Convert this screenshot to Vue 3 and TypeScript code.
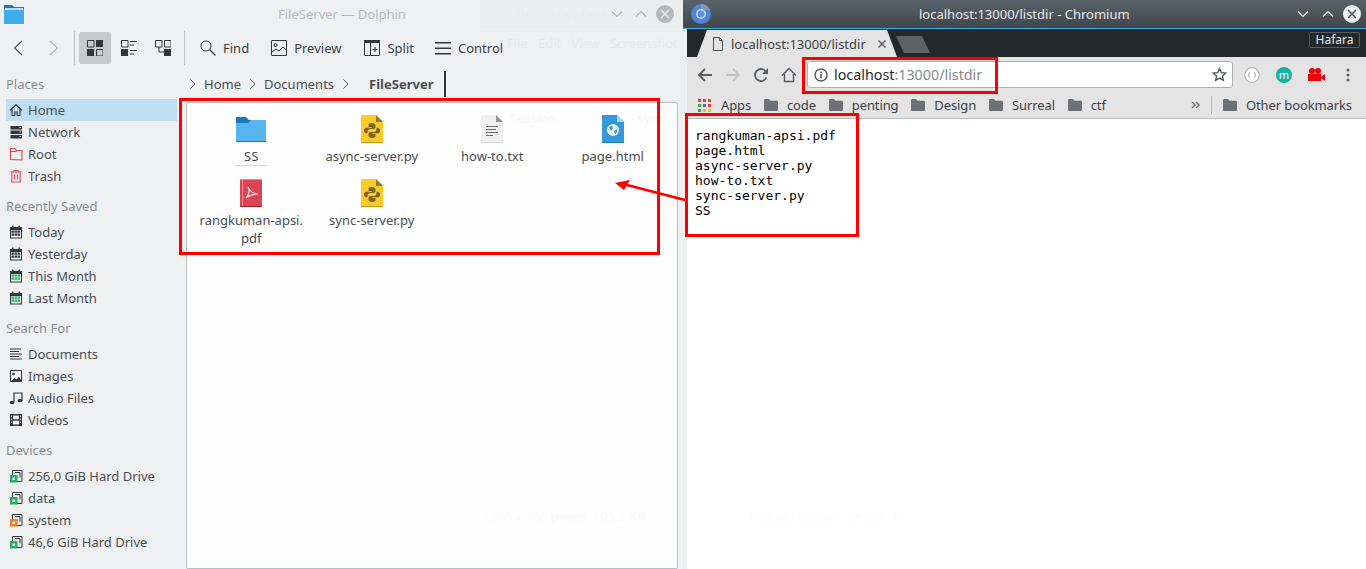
<script setup lang="ts">
interface PlaceItem {
  label: string
  icon: string
}

interface PlaceSection {
  title: string
  items: PlaceItem[]
}

interface FileItem {
  name: string
  kind: string
}

const D = '#31363b'
const R = '#da4453'
const G = '#27ae60'

const calendar = (c: string) =>
  `<path fill="${D}" d="M2 3h2V1.500h1.500V3h5V1.500h1.500V3h2v11.500H2z"/><rect x="3" y="6" width="10" height="7.500" fill="#eff0f1"/>` +
  [3.5, 6.5, 9.5].map(x => [6.5, 9.5].map(y => `<rect x="${x}" y="${y}" width="2.500" height="2.200" fill="${c}"/>`).join('')).join('')

const hdd = (c: string) =>
  `<path fill="none" stroke="${D}" d="M4.500 2.500h9.500v11H4.500z"/><path fill="none" stroke="${D}" d="M7 4.500h5v5"/><rect x="2" y="7" width="7.500" height="7.500" fill="${c}"/><rect x="4.500" y="9.500" width="2.500" height="2.500" fill="#eff0f1"/>`

const icons: Record<string, string> = {
  home: `<path fill="none" stroke="${D}" stroke-width="1.100" d="M2 8.500 8 2.500l6 6M4 7v6.500h2.800V10h2.400v3.500H12V7"/>`,
  network: `<path fill="${D}" d="M2.500 2h11.500v3.500H2.500zM2.500 6.500h11.500V10H2.500zM2.500 11h11.500v3.500H2.500z"/><path fill="#eff0f1" d="M11.500 3h1.500v1h-1.500zM11.500 7.500h1.500v1h-1.500zM11.500 12h1.500v1h-1.500z"/>`,
  root: `<path fill="none" stroke="${R}" stroke-width="1.100" d="M2.500 13.500v-11h4.500l1.500 2h5.500v9.500zM2.500 5.500H8l1-1"/>`,
  trash: `<path fill="none" stroke="${R}" stroke-width="1.100" d="M2.500 4h11M6 4V2.500h4V4M3.800 4v10h8.400V4M6.500 6.500v5M9.500 6.500v5"/>`,
  calDark: calendar(D),
  calGreen: calendar(G),
  docs: `<path fill="none" stroke="${D}" d="M2 3h11M2 5.500h9M2 8h12M2 10.500h9M2 13h12"/>`,
  images: `<path fill="none" stroke="${D}" d="M2.500 2.500h11v11h-11z"/><circle cx="5.500" cy="6" r="1.300" fill="${D}"/><path fill="${D}" d="M3 13l3.500-3 2 1.500 2.500-3 2.500 4.500z"/>`,
  audio: `<path fill="none" stroke="${D}" stroke-width="1.200" d="M6 12V3h8v8"/><ellipse cx="4" cy="12.500" rx="2.300" ry="1.700" fill="${D}"/><ellipse cx="12" cy="10.500" rx="2.300" ry="1.700" fill="${D}"/>`,
  video: `<path fill="${D}" d="M2 2h12v12H2z"/><path fill="#eff0f1" d="M5 3.500h6v3.800H5zM5 8.700h6v3.800H5zM3 3.500h1v1.500H3zM3 6.500h1V8H3zM3 9.500h1V11H3zM12 3.500h1v1.500h-1zM12 6.500h1V8h-1zM12 9.500h1V11h-1z"/>`,
  hddGreen: hdd(G),
  hddOrange: hdd('#f47c1c'),
}

const sections: PlaceSection[] = [
  {
    title: 'Places',
    items: [
      { label: 'Home', icon: 'home' },
      { label: 'Network', icon: 'network' },
      { label: 'Root', icon: 'root' },
      { label: 'Trash', icon: 'trash' },
    ],
  },
  {
    title: 'Recently Saved',
    items: [
      { label: 'Today', icon: 'calDark' },
      { label: 'Yesterday', icon: 'calDark' },
      { label: 'This Month', icon: 'calGreen' },
      { label: 'Last Month', icon: 'calGreen' },
    ],
  },
  {
    title: 'Search For',
    items: [
      { label: 'Documents', icon: 'docs' },
      { label: 'Images', icon: 'images' },
      { label: 'Audio Files', icon: 'audio' },
      { label: 'Videos', icon: 'video' },
    ],
  },
  {
    title: 'Devices',
    items: [
      { label: '256,0 GiB Hard Drive', icon: 'hddGreen' },
      { label: 'data', icon: 'hddGreen' },
      { label: 'system', icon: 'hddOrange' },
      { label: '46,6 GiB Hard Drive', icon: 'hddGreen' },
    ],
  },
]

const files: FileItem[] = [
  { name: 'SS', kind: 'folder' },
  { name: 'async-server.py', kind: 'py' },
  { name: 'how-to.txt', kind: 'txt' },
  { name: 'page.html', kind: 'html' },
  { name: 'rangkuman-apsi.\npdf', kind: 'pdf' },
  { name: 'sync-server.py', kind: 'py' },
]

const bookmarks = ['code', 'penting', 'Design', 'Surreal', 'ctf']

const listing = `rangkuman-apsi.pdf
page.html
async-server.py
how-to.txt
sync-server.py
SS`
</script>

<template>
  <div class="desktop">
    <!-- Dolphin -->
    <div class="dolphin">
      <div class="kde-title">
        <svg class="app-folder" width="20" height="20" viewBox="0 0 20 20">
          <path fill="#1d78b5" d="M0 1h8l2 2h10v4H0z" />
          <path fill="#3daee9" d="M0 5h20v15H0z" />
          <path fill="#bfe0f4" d="M1 4h18v2H1z" />
        </svg>
        <span class="kde-title-text">FileServer — Dolphin</span>
        <div class="win-btns">
          <svg width="14" height="14" viewBox="0 0 14 14"><path fill="none" stroke="#b5b7b9" stroke-width="1.200" d="M2 4.500l5 5 5-5" /></svg>
          <svg width="14" height="14" viewBox="0 0 14 14"><path fill="none" stroke="#b5b7b9" stroke-width="1.200" d="M2 9.500l5-5 5 5" /></svg>
          <svg width="18" height="18" viewBox="0 0 18 18">
            <circle cx="9" cy="9" r="9" fill="#b9bbbd" />
            <path fill="none" stroke="#eff0f1" stroke-width="1.500" d="M5 5l8 8M13 5l-8 8" />
          </svg>
        </div>
      </div>

      <div class="kde-toolbar">
        <button class="tool-nav">
          <svg width="16" height="16" viewBox="0 0 16 16"><path fill="none" stroke="#4d5257" stroke-width="1.100" d="M11 1 3.500 8l7.500 7" /></svg>
        </button>
        <button class="tool-nav">
          <svg width="16" height="16" viewBox="0 0 16 16"><path fill="none" stroke="#aeb0b3" stroke-width="1.100" d="M5 1l7.500 7L5 15" /></svg>
        </button>
        <span class="tool-sep first"></span>
        <button class="tool-view active">
          <svg width="16" height="16" viewBox="0 0 16 16">
            <path fill="none" stroke="#31363b" d="M.5.500h6.500v6.500H.5zM9.500 9.500H16V16H9.500z" />
            <path fill="#31363b" d="M9 0h7v7H9zM0 9h7v7H0z" />
          </svg>
        </button>
        <button class="tool-view">
          <svg width="16" height="16" viewBox="0 0 16 16">
            <path fill="none" stroke="#31363b" d="M.5.500h6.500v6.500H.5zM9 1.500h7M9 5h4M9 10.500h7M9 14h4" />
            <path fill="#31363b" d="M0 9h7v7H0z" />
          </svg>
        </button>
        <button class="tool-view">
          <svg width="16" height="16" viewBox="0 0 16 16">
            <path fill="none" stroke="#31363b" d="M.5.500h6.500v6.500H.5zM9.500.500H16v6.500H9.500zM4 7v5h5" />
            <path fill="#31363b" d="M9 9h7v7H9z" />
          </svg>
        </button>
        <span class="tool-sep last"></span>
        <div class="tool-actions">
          <div class="action">
            <svg width="16" height="16" viewBox="0 0 16 16">
              <circle cx="6" cy="6" r="5" fill="none" stroke="#31363b" />
              <path stroke="#31363b" stroke-width="1.200" d="M9.500 9.500 15.500 15.500" />
            </svg>
            <span>Find</span>
          </div>
          <div class="action">
            <svg width="16" height="16" viewBox="0 0 16 16">
              <path fill="none" stroke="#31363b" d="M.5.500h15v15H.5z" />
              <circle cx="4.500" cy="5" r="1.500" fill="none" stroke="#31363b" />
              <path fill="none" stroke="#31363b" d="M1 12l4-3 3 2 4-4 3.500 3" />
            </svg>
            <span>Preview</span>
          </div>
          <div class="action split">
            <svg width="16" height="16" viewBox="0 0 16 16">
              <path fill="none" stroke="#31363b" d="M.5.500h15v15H.5zM6.500 3v12.500M8.500 9.500h5M11 7v5" />
              <path fill="#31363b" d="M0 0h16v3H0z" />
            </svg>
            <span>Split</span>
          </div>
          <div class="action">
            <svg width="16" height="16" viewBox="0 0 16 16">
              <path fill="#31363b" d="M0 2h16v1.500H0zM0 7.500h16V9H0zM0 13h16v1.500H0z" />
            </svg>
            <span>Control</span>
          </div>
        </div>
      </div>

      <div class="kde-body">
        <aside class="places">
          <section v-for="section in sections" :key="section.title" class="place-section">
            <div class="place-title">{{ section.title }}</div>
            <div
              v-for="(item, i) in section.items"
              :key="item.label"
              :class="['place-row', { selected: section.title === 'Places' && i === 0 }]"
            >
              <svg width="16" height="16" viewBox="0 0 16 16" v-html="icons[item.icon]"></svg>
              <span>{{ item.label }}</span>
            </div>
          </section>
        </aside>

        <main class="view-side">
          <div class="crumbs">
            <svg width="8" height="12" viewBox="0 0 8 12"><path fill="none" stroke="#4d5257" d="M1.500 1.500 6 6l-4.500 4.500" /></svg>
            <span class="crumb">Home</span>
            <svg width="8" height="12" viewBox="0 0 8 12"><path fill="none" stroke="#4d5257" d="M1.500 1.500 6 6l-4.500 4.500" /></svg>
            <span class="crumb">Documents</span>
            <svg width="8" height="12" viewBox="0 0 8 12"><path fill="none" stroke="#4d5257" d="M1.500 1.500 6 6l-4.500 4.500" /></svg>
            <span class="crumb current">FileServer</span>
            <span class="crumb-cursor"></span>
          </div>
          <div class="file-panel">
            <div class="file-grid">
              <div v-for="file in files" :key="file.name" class="file-cell">
                <svg width="32" height="32" viewBox="0 0 32 32">
                  <template v-if="file.kind === 'folder'">
                    <path fill="#1d78b5" d="M1 3h10l3 3h17v6H1z" />
                    <path fill="#56b5ee" d="M1 9h12l3-3h15v21H1z" />
                    <path fill="#1d78b5" d="M1 27h30v1H1z" />
                  </template>
                  <template v-else-if="file.kind === 'py'">
                    <path fill="#fdc92b" d="M5 1h15l7 7v21H5z" />
                    <path fill="#8f7a3c" d="M20 1l7 7h-7z" />
                    <path fill="#c59a1a" d="M5 28h22v1H5z" />
                    <g fill="#7a6420">
                      <path d="M15.800 9c-3 0-3.300 1.300-3.300 2.500V13h3.500v.7h-5.500c-1.500 0-2.500 1-2.500 2.800s1 2.800 2.300 2.800h1.200v-1.700c0-1.300 1.100-2.500 2.500-2.500h3.500c1.100 0 2-.9 2-2v-1.600c0-1.100-1.100-2.500-3.700-2.500z" />
                      <path transform="rotate(180 16 16.500)" d="M15.800 9c-3 0-3.300 1.300-3.300 2.500V13h3.500v.7h-5.500c-1.500 0-2.500 1-2.500 2.800s1 2.800 2.300 2.800h1.200v-1.700c0-1.300 1.100-2.500 2.500-2.500h3.500c1.100 0 2-.9 2-2v-1.600c0-1.100-1.100-2.500-3.700-2.500z" />
                    </g>
                  </template>
                  <template v-else-if="file.kind === 'txt'">
                    <path fill="#f0f0f0" d="M5 1h15l7 7v21H5z" />
                    <path fill="#8f9193" d="M20 1l7 7h-7z" />
                    <path fill="#d5d6d7" d="M5 28h22v1H5z" />
                    <path fill="none" stroke="#6b6d70" d="M10 12.500h12M10 15.500h10M10 18.500h12M10 21.500h7" />
                  </template>
                  <template v-else-if="file.kind === 'html'">
                    <path fill="#3498db" d="M5 1h15l7 7v21H5z" />
                    <path fill="#a9d6f3" d="M20 1l7 7h-7z" />
                    <path fill="#1d78b5" d="M5 28h22v1H5z" />
                    <circle cx="16" cy="16" r="6" fill="#e8f4fc" />
                    <path fill="#3498db" d="M12 13l3-1 1 2-2 3zM17 17l3-2v3l-2 2z" />
                  </template>
                  <template v-else>
                    <path fill="#da4453" d="M5 1h22v28H5z" />
                    <path fill="#e98a94" d="M5 1h22v1H5zM7 1h1v28H7z" />
                    <path fill="#a81f2c" d="M5 28h22v1H5z" />
                    <path fill="none" stroke="#f7d6d9" stroke-width="1.200" d="M13 9c2 4 1 8-2 11 4-3 8-4 12-4-4 0-8-3-10-7z" />
                  </template>
                </svg>
                <span :class="['file-name', { focused: file.kind === 'folder' }]">{{ file.name }}</span>
              </div>
            </div>
          </div>
        </main>
      </div>
    </div>

    <!-- Chromium -->
    <div class="chromium">
      <div class="chr-title">
        <svg class="chr-logo" width="20" height="20" viewBox="0 0 20 20">
          <circle cx="10" cy="10" r="10" fill="#4f84d8" />
          <path fill="#8b98a6" d="M10 0a10 10 0 0 1 9.200 6H10z" />
          <circle cx="10" cy="10" r="5" fill="#c6d8f2" />
          <circle cx="10" cy="10" r="3.400" fill="#5b8fe0" />
        </svg>
        <span class="chr-title-text">localhost:13000/listdir - Chromium</span>
        <div class="win-btns chr-btns">
          <svg width="14" height="14" viewBox="0 0 14 14"><path fill="none" stroke="#e8eaeb" stroke-width="1.200" d="M2 4.500l5 5 5-5" /></svg>
          <svg width="14" height="14" viewBox="0 0 14 14"><path fill="none" stroke="#e8eaeb" stroke-width="1.200" d="M2 9.500l5-5 5 5" /></svg>
          <svg width="18" height="18" viewBox="0 0 18 18">
            <circle cx="9" cy="9" r="9" fill="#eff0f1" />
            <path fill="none" stroke="#4d5358" stroke-width="1.500" d="M5 5l8 8M13 5l-8 8" />
          </svg>
        </div>
      </div>

      <div class="chr-frame">
        <div class="chr-tabs">
          <div class="chr-tab">
            <svg width="12" height="14" viewBox="0 0 12 14"><path fill="none" stroke="#4d5257" d="M1.500.5h6l3 3v10h-9zM7.500.5v3h3" /></svg>
            <span>localhost:13000/listdir</span>
            <svg width="10" height="10" viewBox="0 0 10 10"><path fill="none" stroke="#5f6368" stroke-width="1.500" d="M1.500 1.500l7 7M8.500 1.500l-7 7" /></svg>
          </div>
          <div class="chr-newtab"></div>
          <div class="chr-user">Hafara</div>
        </div>

        <div class="chr-toolbar">
          <button class="chr-nav">
            <svg width="16" height="16" viewBox="0 0 16 16"><path fill="none" stroke="#5a5e62" stroke-width="1.800" d="M15 8H2M8 2 2 8l6 6" /></svg>
          </button>
          <button class="chr-nav">
            <svg width="16" height="16" viewBox="0 0 16 16"><path fill="none" stroke="#c2c3c4" stroke-width="1.800" d="M1 8h13M8 2l6 6-6 6" /></svg>
          </button>
          <button class="chr-nav">
            <svg width="16" height="16" viewBox="0 0 16 16">
              <path fill="none" stroke="#5a5e62" stroke-width="1.800" d="M13.500 10.500A6 6 0 1 1 12.500 4" />
              <path fill="#5a5e62" d="M15 1v6H9z" />
            </svg>
          </button>
          <button class="chr-nav">
            <svg width="16" height="16" viewBox="0 0 16 16"><path fill="none" stroke="#5a5e62" stroke-width="1.500" d="M1 8.500 8 1.500l7 7M3.500 7v7.500h9V7" /></svg>
          </button>
          <div class="omnibox">
            <svg width="14" height="14" viewBox="0 0 14 14">
              <circle cx="7" cy="7" r="6" fill="none" stroke="#55585c" stroke-width="1.400" />
              <path fill="#55585c" d="M6.200 6h1.600v4.500H6.200zM6.200 3.500h1.600V5H6.200z" />
            </svg>
            <span class="url"><b>localhost</b>:13000/listdir</span>
            <svg class="star" width="15" height="15" viewBox="0 0 15 15">
              <path fill="none" stroke="#4d5257" stroke-width="1.300" d="M7.500 1.500 9.300 5.600l4.500.4-3.400 3 1 4.400-3.900-2.300-3.900 2.300 1-4.400-3.400-3 4.500-.4z" />
            </svg>
          </div>
          <div class="ext">
            <svg width="16" height="16" viewBox="0 0 16 16">
              <circle cx="8" cy="8" r="7.300" fill="#fff" stroke="#b5b7b9" stroke-width="1.200" />
              <path fill="none" stroke="#9a9c9f" d="M6 5.500c-1 0-1 .7-1 1.200s0 1.300-.8 1.300c.8 0 .8.800.8 1.300s0 1.200 1 1.200M10 5.500c1 0 1 .7 1 1.200s0 1.300.8 1.300c-.8 0-.8.800-.8 1.300s0 1.200-1 1.200" />
            </svg>
          </div>
          <div class="ext">
            <span class="ext-m">m</span>
          </div>
          <div class="ext">
            <svg width="18" height="16" viewBox="0 0 18 16">
              <circle cx="5" cy="4" r="3" fill="#e8000d" />
              <circle cx="11" cy="4" r="3" fill="#e8000d" />
              <path fill="#e8000d" d="M1 7h13v7H1zM14 10l4-3v7l-4-3z" />
            </svg>
          </div>
          <div class="ext">
            <svg width="4" height="14" viewBox="0 0 4 14">
              <circle cx="2" cy="2" r="1.500" fill="#5a5e62" />
              <circle cx="2" cy="7" r="1.500" fill="#5a5e62" />
              <circle cx="2" cy="12" r="1.500" fill="#5a5e62" />
            </svg>
          </div>
        </div>

        <div class="chr-bookmarks">
          <div class="bm">
            <svg class="bm-apps" width="13" height="13" viewBox="0 0 13 13">
              <path fill="#ea4335" d="M0 0h3v3H0zM5 0h3v3H5zM10 0h3v3h-3z" />
              <path fill="#34a853" d="M0 5h3v3H0z" />
              <path fill="#4a6fe0" d="M5 5h3v3H5z" />
              <path fill="#ea4335" d="M10 5h3v3h-3z" />
              <path fill="#34a853" d="M0 10h3v3H0z" />
              <path fill="#fbbc05" d="M5 10h3v3H5zM10 10h3v3h-3z" />
            </svg>
            <span>Apps</span>
          </div>
          <div v-for="name in bookmarks" :key="name" class="bm">
            <svg width="14" height="12" viewBox="0 0 14 12"><path fill="#6d7175" d="M0 1.500C0 .7.500 0 1.300 0h3.700l1.500 1.700h6.200c.7 0 1.300.6 1.300 1.300v7.700c0 .7-.6 1.300-1.300 1.300H1.300C.5 12 0 11.400 0 10.700z" /></svg>
            <span>{{ name }}</span>
          </div>
          <div class="bm-right">
            <svg width="9" height="8" viewBox="0 0 9 8"><path fill="none" stroke="#6d7175" stroke-width="1.400" d="M1 1l3 3-3 3M5 1l3 3-3 3" /></svg>
            <span class="bm-sep"></span>
            <div class="bm">
              <svg width="14" height="12" viewBox="0 0 14 12"><path fill="#6d7175" d="M0 1.500C0 .7.500 0 1.300 0h3.700l1.500 1.700h6.200c.7 0 1.300.6 1.300 1.300v7.700c0 .7-.6 1.300-1.300 1.300H1.300C.5 12 0 11.400 0 10.700z" /></svg>
              <span>Other bookmarks</span>
            </div>
          </div>
        </div>

        <pre class="listing">{{ listing }}</pre>
      </div>
    </div>

    <!-- window behind the translucent ones, barely showing through -->
    <div class="ghost ghost-title">/home/arafaee</div>
    <div class="ghost ghost-menu">File&nbsp;&nbsp; Edit&nbsp;&nbsp; View&nbsp;&nbsp; Screenshot</div>
    <div class="ghost ghost-session">Session</div>
    <div class="ghost ghost-sync">- sync_li</div>
    <div class="ghost ghost-size">1366 x 768 pixels&nbsp; 105.3 KB</div>
    <div class="ghost ghost-cursor">Include Cursor&nbsp;&nbsp; Delay:&nbsp; 0</div>

    <!-- annotations drawn over the screenshot -->
    <div class="mark mark-files"></div>
    <div class="mark mark-url"></div>
    <div class="mark mark-list"></div>
    <svg class="mark-arrow" width="80" height="40" viewBox="0 0 80 40">
      <path fill="none" stroke="#f00" stroke-width="2.500" d="M72 25 10 9" />
      <path fill="#f00" d="M2 8 17 5 11 15z" />
    </svg>
  </div>
</template>

<style>
html,
body {
  margin: 0;
  background: #eff0f1;
}
</style>

<style scoped>
.desktop {
  position: relative;
  display: flex;
  width: 1366px;
  height: 569px;
  overflow: hidden;
  background: #eff0f1;
  font-family: "Noto Sans", sans-serif;
  font-size: 13px;
  color: #4a4e52;
}

button {
  border: 0;
  padding: 0;
  background: none;
  display: flex;
  align-items: center;
  justify-content: center;
}

/* Dolphin */
.dolphin {
  width: 683px;
  flex: none;
  display: flex;
  flex-direction: column;
}

.kde-title {
  height: 28px;
  flex: none;
  display: flex;
  align-items: center;
  padding: 0 9px 0 4px;
}

.app-folder {
  flex: none;
}

.kde-title-text {
  margin-left: 254px;
  color: #b9babb;
}

.win-btns {
  margin-left: auto;
  display: flex;
  align-items: center;
  gap: 8px;
}

.win-btns svg:first-child {
  margin-right: 2px;
}

.kde-toolbar {
  height: 40px;
  flex: none;
  display: flex;
  align-items: center;
  padding-left: 2px;
  color: #3b3f44;
}

.tool-nav {
  width: 34px;
  height: 32px;
}

.tool-sep {
  width: 1px;
  height: 34px;
  background: #c0c1c2;
  margin: 0 4px 0 0;
}

.tool-sep.first {
  margin-left: 4px;
}

.tool-sep.last {
  margin-left: 3px;
}

.tool-view {
  width: 32px;
  height: 32px;
  margin-right: 2px;
  border-radius: 2px;
}

.tool-view.active {
  background: #c8c9ca;
}

.tool-actions {
  display: flex;
  gap: 22px;
  margin-left: 11px;
}

.action {
  display: flex;
  align-items: center;
  gap: 7px;
}

.action.split {
  margin: 0 -1px 0 1px;
}

.kde-body {
  flex: 1;
  min-height: 0;
  display: flex;
}

.places {
  width: 186px;
  flex: none;
  padding: 5px 9px 0 6px;
  box-sizing: border-box;
}

.place-section {
  margin-bottom: 8px;
}

.place-title {
  height: 22px;
  line-height: 22px;
  margin-bottom: 4px;
  color: #8a8d90;
}

.place-row {
  height: 22px;
  display: flex;
  align-items: center;
  gap: 4px;
  padding-left: 2px;
}

.place-row.selected {
  background: #c0def3;
}

.view-side {
  flex: 1;
  min-width: 0;
  display: flex;
  flex-direction: column;
  padding-right: 5px;
}

.crumbs {
  height: 34px;
  flex: none;
  display: flex;
  align-items: center;
  padding: 0 0 2px 3px;
  box-sizing: border-box;
}

.crumb {
  margin: 0 8px 0 7px;
}

.crumb.current {
  font-weight: 700;
  margin-left: 19px;
}

.crumb-cursor {
  width: 2px;
  height: 26px;
  margin-left: 3px;
  background: #31363b;
}

.file-panel {
  flex: 1;
  background: #fdfdfd;
  border: 1px solid #bcbebf;
  border-radius: 2px;
  padding: 11px 0 0 4px;
}

.file-grid {
  display: grid;
  grid-template-columns: repeat(4, 120.5px);
  grid-template-rows: 64px auto;
}

.file-cell {
  display: flex;
  flex-direction: column;
  align-items: center;
}

.file-name {
  padding-top: 1px;
  line-height: 18px;
  white-space: pre-line;
  text-align: center;
}

.file-name.focused {
  padding: 1px 9px 0;
  border-bottom: 1px solid #c0def3;
}

/* Chromium */
.chromium {
  flex: 1;
  min-width: 0;
  display: flex;
  flex-direction: column;
}

.chr-title {
  height: 28px;
  flex: none;
  display: flex;
  align-items: center;
  padding: 0 5px 0 8px;
  background: linear-gradient(#5a636b, #3f464c);
  border-bottom: 1px solid #3daee9;
  color: #e8eaeb;
}

.chr-logo {
  flex: none;
}

.chr-title-text {
  margin-left: 208px;
}

.chr-btns svg:first-child {
  margin-right: 3px;
}

.chr-frame {
  flex: 1;
  min-height: 0;
  display: flex;
  flex-direction: column;
  border-left: 4px solid #eff0f1;
  background: #fff;
}

.chr-tabs {
  height: 28px;
  flex: none;
  display: flex;
  align-items: flex-end;
  padding-left: 10px;
  background: #24282b;
}

.chr-tab {
  width: 200px;
  height: 27px;
  flex: none;
  box-sizing: border-box;
  display: flex;
  align-items: center;
  padding-left: 15px;
  background: #e4e4e4;
  clip-path: polygon(0 100%, 10px 0, 190px 0, 100% 100%);
  color: #3b3f44;
}

.chr-tab svg {
  flex: none;
}

.chr-tab span {
  margin: 0 11px 0 7px;
  white-space: nowrap;
}

.chr-newtab {
  width: 34px;
  height: 17px;
  flex: none;
  margin: 0 0 4px -1px;
  background: #5d6266;
  clip-path: polygon(0 0, 26px 0, 100% 100%, 8px 100%);
  align-self: flex-end;
}

.chr-user {
  margin: 0 6px 9px auto;
  width: 51px;
  height: 16px;
  box-sizing: border-box;
  border: 1px solid #555a5e;
  border-radius: 2px;
  color: #e8eaeb;
  font-size: 12px;
  line-height: 14px;
  text-align: center;
}

.chr-toolbar {
  height: 35px;
  flex: none;
  box-sizing: border-box;
  display: flex;
  align-items: center;
  padding: 0 2px 0 4px;
  background: #e4e4e4;
}

.chr-nav {
  width: 28px;
  height: 28px;
  flex: none;
}

.omnibox {
  flex: 1;
  height: 27px;
  box-sizing: border-box;
  margin: 0 3px 0 4px;
  display: flex;
  align-items: center;
  padding: 0 5px 0 6px;
  background: #fff;
  border: 1px solid #aeb0b2;
  border-radius: 3px;
}

.url {
  margin-left: 6px;
  font-size: 14.3px;
  color: #86898c;
}

.url b {
  font-weight: 400;
  color: #26292c;
}

.star {
  margin-left: auto;
}

.ext {
  width: 32px;
  flex: none;
  display: flex;
  align-items: center;
  justify-content: center;
}

.ext-m {
  width: 16px;
  height: 16px;
  border-radius: 50%;
  background: #12b3a8;
  color: #fff;
  font-size: 11px;
  line-height: 15px;
  text-align: center;
}

.chr-bookmarks {
  height: 27px;
  flex: none;
  box-sizing: border-box;
  display: flex;
  align-items: center;
  gap: 12.800px;
  padding: 0 14px 0 11px;
  background: #e4e4e4;
  border-bottom: 1px solid #b9babb;
  color: #3b3f44;
  letter-spacing: -0.1px;
}

.bm {
  display: flex;
  align-items: center;
  gap: 9px;
}

.bm-apps {
  margin-right: 1px;
}

.bm-right {
  margin-left: auto;
  display: flex;
  align-items: center;
  gap: 11px;
}

.bm-sep {
  width: 1px;
  height: 18px;
  background: #b9babb;
}

.listing {
  margin: 9px 0 0 8px;
  font-family: "DejaVu Sans Mono", monospace;
  font-size: 13px;
  line-height: 15px;
  color: #000;
}

.ghost {
  position: absolute;
  white-space: nowrap;
  pointer-events: none;
}

.ghost-title {
  left: 480px;
  top: 0;
  width: 167px;
  height: 28px;
  line-height: 28px;
  padding-left: 36px;
  background: rgba(0, 0, 0, 0.01);
  color: #e9eaeb;
}

.ghost-menu {
  left: 507px;
  top: 34px;
  color: #e8e9ea;
}

.ghost-session {
  left: 510px;
  top: 109px;
  color: #f8f8f8;
}

.ghost-sync {
  left: 630px;
  top: 109px;
  color: #f8f8f8;
}

.ghost-size {
  left: 482px;
  top: 507px;
  color: #fafafa;
}

.ghost-cursor {
  left: 749px;
  top: 507px;
  color: #fcfcfc;
}

/* red annotation boxes */
.mark {
  position: absolute;
  box-sizing: border-box;
  border: 3px solid #f00;
}

.mark-files {
  left: 179px;
  top: 98px;
  width: 481px;
  height: 157px;
}

.mark-url {
  left: 802px;
  top: 57px;
  width: 196px;
  height: 37px;
}

.mark-list {
  left: 685px;
  top: 113px;
  width: 174px;
  height: 124px;
}

.mark-arrow {
  position: absolute;
  left: 613px;
  top: 175px;
}
</style>
